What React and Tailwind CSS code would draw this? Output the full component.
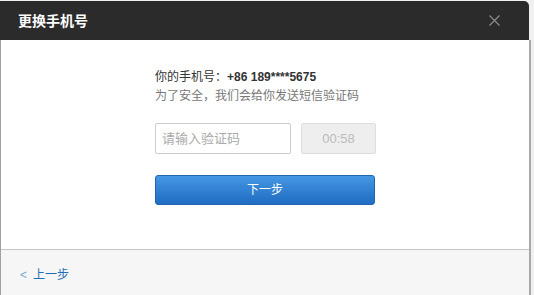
import React, { useState } from "react"

function App() {
    const [code, setCode] = useState("")

    return (
        <div className="w-[534px] h-[295px] bg-[#f0f0f0] overflow-hidden font-['Liberation_Sans','Noto_Sans_CJK_SC',sans-serif]">
            <div className="w-[531px] pt-px flex flex-col h-full">
                {/* header */}
                <div className="w-[529px] h-[39px] bg-[#2b2b2b] rounded-tr-[5px] flex items-center justify-between pl-[18px] pr-[29px]">
                    <h3 className="text-white text-[14px] font-bold leading-none">更换手机号</h3>
                    <button className="text-[#8a8a8a]">
                        <svg width="11" height="11" viewBox="0 0 11 11" stroke="currentColor" strokeWidth="1.3">
                            <path d="M0.5 0.5 L10.5 10.5 M10.5 0.5 L0.5 10.5" />
                        </svg>
                    </button>
                </div>

                {/* body */}
                <div className="flex-1 flex flex-col border-l border-l-[#a0a0a0] border-r-2 border-r-[#a8a8a8] bg-white">
                    <div className="h-[209px] pl-[154px] pt-[28px]">
                        <p className="text-[12px] leading-[19px] text-[#333]">
                            你的手机号：<span className="font-bold">+86 189****5675</span>
                        </p>
                        <p className="text-[12px] leading-[19px] text-[#777]">为了安全，我们会给你发送短信验证码</p>

                        <div className="flex gap-[10px] mt-[17px]">
                            <input
                                type="text"
                                value={code}
                                onChange={e => setCode(e.target.value)}
                                placeholder="请输入验证码"
                                className="w-[136px] h-[31px] border border-[#ccc] rounded-[2px] px-[6px] text-[13px] text-[#333] placeholder:text-[#aaa] outline-none"
                            />
                            <button className="w-[75px] h-[31px] bg-[#eee] border border-[#ddd] rounded-[2px] text-[13px] text-[#bbb]">00:58</button>
                        </div>

                        <button className="mt-[21px] w-[220px] h-[30px] rounded-[3px] border border-[#1f65b0] bg-gradient-to-b from-[#4597e3] to-[#1f6cc2] text-white text-[12px]">
                            下一步
                        </button>
                    </div>

                    {/* footer */}
                    <div className="flex-1 bg-[#f6f6f6] border-t border-t-[#c4c4c4] pl-[19px] pt-[12px]">
                        <a href="#" className="text-[12px] text-[#1f6fb5]">
                            <span className="text-[#7aa6d0] mr-[6px]">&lt;</span>上一步
                        </a>
                    </div>
                </div>
            </div>
        </div>
    )
}

export default App
